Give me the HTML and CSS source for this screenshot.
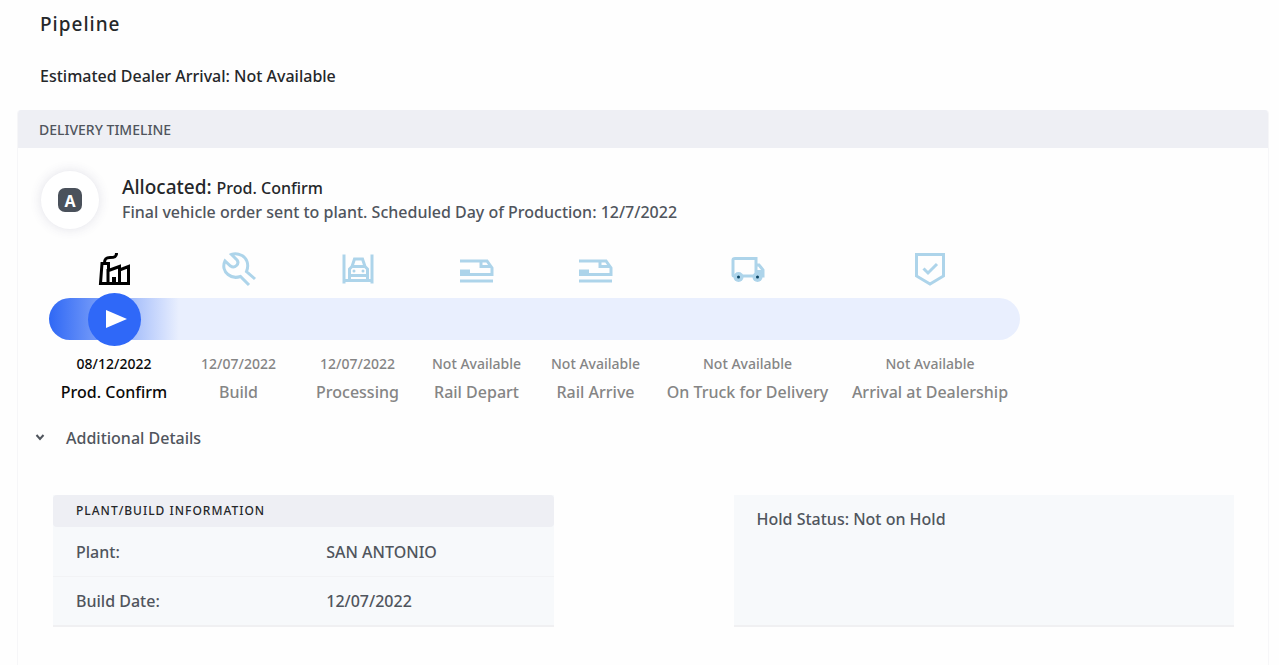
FILE: index.html
```
<!DOCTYPE html>
<html lang="en">

<head>
    <meta charset="UTF-8">
    <meta name="viewport" content="width=device-width, initial-scale=1.0">
    <title>Pipeline</title>
    <link rel="stylesheet" href="styles.css">
</head>

<body>
    <header class="page-header">
        <h1>Pipeline</h1>
        <p>Estimated Dealer Arrival: Not Available</p>
    </header>

    <main class="card">
        <h2 class="card-title">DELIVERY TIMELINE</h2>

        <section class="status">
            <div class="status-icon"><span>A</span></div>
            <div class="status-text">
                <h3>Allocated: <small>Prod. Confirm</small></h3>
                <p>Final vehicle order sent to plant. Scheduled Day of Production: 12/7/2022</p>
            </div>
        </section>

        <ol class="timeline">
            <li class="step active">
                <svg class="step-icon" viewBox="0 0 36 36">
                    <path d="M4.500 32.500H32.500V15.500L23.500 19V15.500L12.500 19.500V12.500H6Z M12 18V32 M23.500 18V32 M8.500 12C8.500 8 10 6.500 14 6.500C18.500 6.500 20.500 6 20.500 2" stroke-width="3" />
                    <path d="M18 26V32" stroke-width="4" />
                </svg>
                <div class="track">
                    <span class="marker">
                        <svg viewBox="0 0 24 24"><path d="M4 3L25 12L4 21Z" /></svg>
                    </span>
                </div>
                <span class="date">08/12/2022</span>
                <span class="name">Prod. Confirm</span>
            </li>
            <li class="step">
                <svg class="step-icon" viewBox="0 0 36 36">
                    <path d="M34 28L25.500 20.500C28.500 13 25.500 7 21 4.500C17 2.500 13 2.500 10.500 3.500L16 9C17.500 11 17 13 15.500 14.500C13.500 16.500 11.500 16.500 9.500 15L4 10C1.500 15 3 20.500 7 23.500C10.500 26.500 15 27 19.500 25.500L28 34" stroke-width="3" />
                </svg>
                <div class="track"></div>
                <span class="date">12/07/2022</span>
                <span class="name">Build</span>
            </li>
            <li class="step">
                <svg class="step-icon" viewBox="0 0 36 36">
                    <path d="M4 3.500V32.500M32 3.500V32.500M4 29.500H32" stroke-width="3" />
                    <path d="M9.500 28V18L12 15.500L14.500 8H22.500L25 15.500L27.500 18V28M12 15.500H25M10 24.500H27" stroke-width="3" />
                    <circle class="dot" cx="14" cy="20" r="1.500" />
                    <circle class="dot" cx="23" cy="20" r="1.500" />
                </svg>
                <div class="track"></div>
                <span class="date">12/07/2022</span>
                <span class="name">Processing</span>
            </li>
            <li class="step">
                <svg class="step-icon" viewBox="0 0 36 36">
                    <path d="M1 10H28L33 17V23.500H1M1 30H34" stroke-width="3" />
                    <path d="M22 10V15.500H32" stroke-width="3" />
                    <path d="M1 21H11" stroke-width="5" />
                </svg>
                <div class="track"></div>
                <span class="date">Not Available</span>
                <span class="name">Rail Depart</span>
            </li>
            <li class="step">
                <svg class="step-icon" viewBox="0 0 36 36">
                    <path d="M1 10H28L33 17V23.500H1M1 30H34" stroke-width="3" />
                    <path d="M22 10V15.500H32" stroke-width="3" />
                    <path d="M1 21H11" stroke-width="5" />
                </svg>
                <div class="track"></div>
                <span class="date">Not Available</span>
                <span class="name">Rail Arrive</span>
            </li>
            <li class="step">
                <svg class="step-icon" viewBox="0 0 36 36">
                    <path d="M8 25H4Q3 25 3 24V9Q3 7.500 5 7.500H26V25H10M26 14H29L33 19V25H26" stroke-width="3" />
                    <path class="dot" d="M26 19H33V25H26Z" />
                    <circle class="dot" cx="8.500" cy="26" r="5" />
                    <circle class="dot" cx="27.500" cy="26" r="5" />
                    <circle class="hub" cx="8.500" cy="26" r="1.500" />
                    <circle class="hub" cx="27.500" cy="26" r="1.500" />
                </svg>
                <div class="track"></div>
                <span class="date">Not Available</span>
                <span class="name">On Truck for Delivery</span>
            </li>
            <li class="step">
                <svg class="step-icon" viewBox="0 0 36 36">
                    <path d="M4.500 3.500H31.500V25L18 33L4.500 25ZM11.500 17.500L16 22L25 13" stroke-width="3" />
                </svg>
                <div class="track"></div>
                <span class="date">Not Available</span>
                <span class="name">Arrival at Dealership</span>
            </li>
        </ol>

        <details class="more" open>
            <summary>
                <svg viewBox="0 0 10 10"><path d="M1.500 2L5 6L8.500 2" /></svg>
                Additional Details
            </summary>
            <div class="panels">
                <table class="build-info">
                    <thead>
                        <tr><th colspan="2">PLANT/BUILD INFORMATION</th></tr>
                    </thead>
                    <tbody>
                        <tr><td>Plant:</td><td>SAN ANTONIO</td></tr>
                        <tr><td>Build Date:</td><td>12/07/2022</td></tr>
                    </tbody>
                </table>
                <div class="hold">Hold Status: Not on Hold</div>
            </div>
        </details>
    </main>
</body>

</html>
```
FILE: styles.css
```
* {
    box-sizing: border-box;
}

body {
    display: flex;
    flex-direction: column;
    min-height: 100vh;
    margin: 0;
    padding: 0 10px 0 17px;
    background-color: #fefefe;
    color: #50555d;
    font-family: "Noto Sans", Lato, sans-serif;
    font-size: 16px;
    font-weight: 500;
    line-height: 24px;
}

h1, h2, h3, p, ol {
    margin: 0;
    padding: 0;
    font-weight: inherit;
}

.page-header {
    height: 110px;
    padding: 12px 23px;
    color: #25272a;
}

.page-header h1 {
    margin-bottom: 28px;
    font-size: 19px;
    letter-spacing: 1px;
}

.card {
    flex: 1;
    border: 1px solid #f6f6f8;
    border-top: none;
    border-radius: 4px 4px 0 0;
    overflow: hidden;
}

.card-title {
    padding: 8px 21px 6px;
    background-color: #eeeff4;
    font-size: 14px;
}

.status {
    display: flex;
    align-items: center;
    gap: 23px;
    padding: 23px 23px 0;
}

.status-icon {
    display: flex;
    align-items: center;
    justify-content: center;
    width: 58px;
    height: 58px;
    border-radius: 50%;
    background-color: #fff;
    box-shadow: 0 0 12px rgba(60, 60, 110, 0.15);
}

.status-icon span {
    width: 24px;
    height: 24px;
    border-radius: 7px;
    background-color: #4a515b;
    color: #fff;
    font-size: 16px;
    font-weight: 700;
    line-height: 26px;
    text-align: center;
}

.status-text {
    padding-bottom: 2px;
}

.status-text h3 {
    color: #25272a;
    font-size: 19px;
}

.status-text small {
    font-size: 16px;
}

.timeline {
    display: grid;
    grid-template-columns: 130fr 119fr 119fr 119fr 119fr 185fr 180fr;
    margin: 22px 248px 0 31px;
    list-style: none;
}

.step {
    display: flex;
    flex-direction: column;
    align-items: center;
    color: #858585;
    white-space: nowrap;
}

.step-icon {
    width: 36px;
    height: 36px;
    margin-bottom: 11px;
    fill: none;
    stroke: #add4ea;
}

.step-icon .dot {
    fill: #add4ea;
    stroke: none;
}

.step-icon .hub {
    fill: #0b4463;
    stroke: none;
}

.track {
    display: flex;
    align-items: center;
    justify-content: center;
    width: 100%;
    height: 42px;
    margin-bottom: 12px;
    background-color: #e9effe;
}

.step:last-child .track {
    border-radius: 0 21px 21px 0;
}

.active {
    color: #0a0a0a;
}

.active .step-icon {
    stroke: #000;
}

.active .track {
    border-radius: 21px 0 0 21px;
    background: linear-gradient(to right, #2f68f5, #e9effe);
}

.marker {
    display: flex;
    flex: none;
    align-items: center;
    justify-content: center;
    width: 53px;
    height: 53px;
    border-radius: 50%;
    background-color: #2f68f8;
}

.marker svg {
    width: 24px;
    height: 24px;
    fill: #fff;
    overflow: visible;
}

.date {
    font-size: 14px;
}

.name {
    margin-top: 4px;
}

.more summary {
    display: flex;
    align-items: center;
    gap: 21px;
    padding: 22px 17px 0;
    list-style: none;
    cursor: pointer;
}

.more summary svg {
    width: 10px;
    height: 10px;
    fill: none;
    stroke: #50555d;
    stroke-width: 2;
}

.panels {
    display: grid;
    grid-template-columns: 1fr 1fr;
    gap: 180px;
    padding: 45px 34px 38px 35px;
}

.build-info {
    width: 100%;
    border-spacing: 0;
    table-layout: fixed;
    background-color: #f7f9fb;
}

.build-info th {
    height: 32px;
    padding: 0 23px;
    border-radius: 4px;
    background-color: #eeeff4;
    color: #25272a;
    font-size: 12px;
    font-weight: 500;
    letter-spacing: 1px;
    text-align: left;
}

.build-info td {
    height: 50px;
    padding: 0 23px;
    border-bottom: 1px solid #f2f3f5;
}

.build-info tr:last-child td {
    border-bottom: 2px solid #f0f0f2;
}

.hold {
    padding: 12px 23px;
    border-bottom: 2px solid #f0f0f2;
    background-color: #f7f9fb;
}
```
